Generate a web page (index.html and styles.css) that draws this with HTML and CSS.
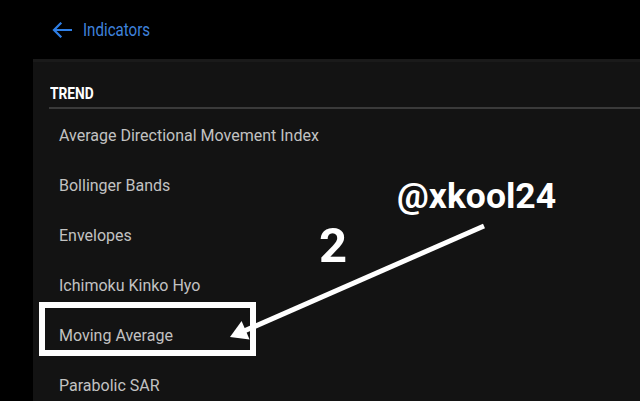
FILE: index.html
```html
<!DOCTYPE html>
<html>
<head>
<meta charset="utf-8">
<link rel="stylesheet" href="styles.css">
</head>
<body>
<div class="screen">
  <header class="topbar">
    <svg class="back" width="20" height="16" viewBox="0 0 20 16" aria-hidden="true">
      <path d="M19 8H2.5M8.5 1.5L2 8l6.5 6.5" fill="none" stroke="#2f7fe6" stroke-width="2.2" stroke-linecap="square"/>
    </svg>
    <span class="title">Indicators</span>
  </header>
  <main class="panel">
    <h2 class="section-head"><span class="section-label">TREND</span></h2>
    <div class="divider"></div>
    <ul class="list">
      <li class="item">Average Directional Movement Index</li>
      <li class="item">Bollinger Bands</li>
      <li class="item">Envelopes</li>
      <li class="item">Ichimoku Kinko Hyo</li>
      <li class="item">Moving Average</li>
      <li class="item">Parabolic SAR</li>
    </ul>
  </main>
  <div class="highlight"></div>
  <svg class="annot-arrow" width="640" height="401" viewBox="0 0 640 401" aria-hidden="true">
    <line x1="484" y1="226" x2="243" y2="331.5" stroke="#fff" stroke-width="5"/>
    <polygon points="230,337 241.6,321 249.6,339.4" fill="#fff"/>
  </svg>
  <div class="step">2</div>
  <div class="handle">@xkool24</div>
</div>
</body>
</html>
```
FILE: styles.css
```css
* { box-sizing: border-box; }
html, body { margin: 0; padding: 0; }
body {
  background: #000;
  font-family: Roboto, "Liberation Sans", sans-serif;
  width: 640px;
  height: 401px;
  overflow: hidden;
}
.screen {
  position: relative;
  width: 640px;
  height: 401px;
  display: flex;
  flex-direction: column;
}
.topbar {
  height: 59px;
  flex: none;
  display: flex;
  align-items: center;
  padding-left: 52px;
}
.back { flex: none; display: block; }
.title {
  display: inline-block;
  margin-left: 11px;
  color: #3f82dc;
  font-size: 18px;
  transform: scaleX(0.84);
  transform-origin: left center;
  line-height: 20px;
}
.panel {
  margin-left: 33px;
  flex: 1;
  background: #131313;
  box-shadow: inset 0 3px 0 #1a1a1a;
}
.section-head {
  margin: 0;
  height: 48px;
  padding: 27px 0 0 17px;
  font-size: 16px;
  line-height: 16px;
  font-weight: 700;
  color: #fff;
}
.section-label {
  display: inline-block;
  transform: scaleX(0.86);
  transform-origin: left center;
}
.divider {
  margin-left: 16px;
  height: 2px;
  background: #3a3a3a;
}
.list {
  list-style: none;
  margin: 0;
  padding: 1px 0 0 0;
}
.item {
  height: 50px;
  display: flex;
  align-items: center;
  padding-left: 26px;
  color: #c2c2c2;
  font-size: 16px;
}
.highlight {
  position: absolute;
  left: 39px;
  top: 302px;
  width: 217px;
  height: 54px;
  border: 6px solid #fff;
}
.annot-arrow {
  position: absolute;
  left: 0;
  top: 0;
}
.step {
  position: absolute;
  left: 319px;
  top: 218px;
  color: #fff;
  font-weight: 700;
  font-size: 49px;
  line-height: 56px;
}
.handle {
  position: absolute;
  left: 397px;
  top: 175px;
  color: #fff;
  font-weight: 700;
  font-size: 35.5px;
  line-height: 42px;
}
```
